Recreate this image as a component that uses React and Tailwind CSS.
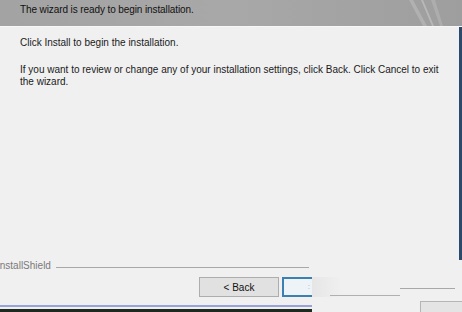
export default function App() {
  return (
    <div className="relative w-[462px] h-[312px] overflow-hidden bg-[#f0f0f0] font-['Liberation_Sans',Arial,sans-serif] text-[10px] text-[#1a1a1a] flex flex-col">
      {/* header band */}
      <div className="relative h-[26px] shrink-0 bg-gradient-to-r from-[#a3a3a3] via-[#a8a8a8] to-[#9e9e9e] flex items-center pl-[20px] pb-[7px] overflow-hidden">
        <span className="relative z-10 text-[#111] leading-none tracking-[-0.1px]">The wizard is ready to begin installation.</span>
        <svg className="absolute right-[3px] top-0" width="60" height="26" viewBox="0 0 60 26">
          <path d="M10 0 L24 26 L28 26 L14 0 Z" fill="#bdbdbd" opacity="0.6" />
          <path d="M22 0 L33 26 L35 26 L24 0 Z" fill="#d2d2d2" opacity="0.5" />
          <path d="M32 0 L41 26 L44 26 L36 0 Z" fill="#c4c4c4" opacity="0.4" />
        </svg>
      </div>
      <div className="h-[1px] shrink-0 bg-[#f7f7f7]" />

      {/* body */}
      <div className="flex-1 flex border-r-[3px] border-[#2b4a6b]">
        <div className="pl-[20px] pr-[16px] pt-[10px] leading-[12px]">
          <p>Click Install to begin the installation.</p>
          <p className="mt-[15px]">
            If you want to review or change any of your installation settings, click Back. Click Cancel to exit the wizard.
          </p>
        </div>
      </div>

      {/* footer */}
      <div className="shrink-0 h-[52px] flex flex-col">
        <div className="w-[312px] flex items-center -ml-[3px]">
          <span className="text-[#7a7a7a] leading-[12px]">InstallShield</span>
          <div className="flex-1 h-[1px] bg-[#a8a8a8] ml-[5px] mt-[2px]" />
        </div>

        <div className="relative flex items-start mt-[5px] pl-[199px] h-[20px]">
          <div className="w-[80px] h-[20px] bg-[#e1e1e1] border border-[#adadad] flex items-center justify-center text-[#111]">
            &lt; Back
          </div>
          <div className="ml-[3px] w-[30px] h-[20px] bg-[#eef3f8] border-2 border-[#3c7fb1] border-r-0 flex items-center justify-end pr-[2px]">
            <span className="text-[#9aa] text-[8px] leading-none">:</span>
          </div>
          <div className="w-[30px] h-[20px] bg-gradient-to-r from-[#e6e6e6] to-[#f0f0f0]" />
          {/* stray lines */}
          <div className="absolute left-[400px] top-[11px] w-[55px] h-[1px] bg-[#a8a8a8]" />
        </div>

        <div className="relative flex-1 flex flex-col justify-end">
          <div className="absolute left-[330px] top-[-2px] w-[70px] h-[1px] bg-[#b0b0b0]" />
          <div className="absolute left-[420px] top-[4px] w-[42px] h-[12px] bg-[#e4e4e4] border-l border-t border-[#b5b5b5]" />
          <div className="w-[312px] h-[2px] bg-[#9aa3d9]" />
          <div className="w-[312px] h-[2px] bg-[#f0f0f0]" />
          <div className="w-[312px] h-[3px] bg-[#1f2a1f]" />
        </div>
      </div>
    </div>
  );
}
